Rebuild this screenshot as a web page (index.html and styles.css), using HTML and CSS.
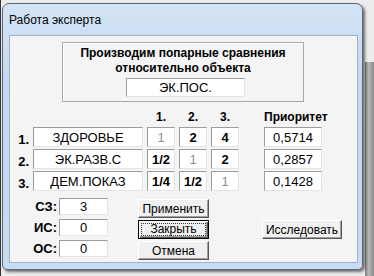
FILE: index.html
```html
<!DOCTYPE html>
<html lang="ru">
<head>
<meta charset="utf-8">
<link rel="stylesheet" href="styles.css">
</head>
<body>
<div class="desktop">
  <div class="window">
    <div class="titlebar">Работа эксперта</div>
    <div class="client">
      <div class="headbox">
        <div class="headtext">Производим попарные сравнения<br>относительно объекта</div>
        <div class="field objfield">ЭК.ПОС.</div>
      </div>

      <div class="matrix">
        <div></div><div></div>
        <div class="colhead">1.</div>
        <div class="colhead">2.</div>
        <div class="colhead">3.</div>
        <div class="colhead prio">Приоритет</div>

        <div class="rownum">1.</div>
        <div class="field">ЗДОРОВЬЕ</div>
        <div class="field cell diag">1</div>
        <div class="field cell">2</div>
        <div class="field cell">4</div>
        <div class="field prio">0,5714</div>

        <div class="rownum">2.</div>
        <div class="field">ЭК.РАЗВ.С</div>
        <div class="field cell">1/2</div>
        <div class="field cell diag">1</div>
        <div class="field cell">2</div>
        <div class="field prio">0,2857</div>

        <div class="rownum">3.</div>
        <div class="field">ДЕМ.ПОКАЗ</div>
        <div class="field cell">1/4</div>
        <div class="field cell">1/2</div>
        <div class="field cell diag">1</div>
        <div class="field prio">0,1428</div>
      </div>

      <div class="bottom">
        <div class="counts">
          <div class="clabel">СЗ:</div><div class="field small">3</div>
          <div class="clabel">ИС:</div><div class="field small">0</div>
          <div class="clabel">ОС:</div><div class="field small">0</div>
        </div>
        <div class="buttons">
          <button class="btn">Применить</button>
          <button class="btn default"><span class="focus">Закрыть</span></button>
          <button class="btn">Отмена</button>
        </div>
        <button class="btn explore">Исследовать</button>
      </div>
    </div>
  </div>
</div>
</body>
</html>
```
FILE: styles.css
```css
* {box-sizing: border-box;}
body {margin: 0; font-family: "Liberation Sans", Arial, sans-serif; color: #000;}
.desktop {
  width: 374px; height: 276px; overflow: hidden; padding: 3px 0 0 2px;
  background:
    linear-gradient(#333, #333) 0 0 / 1px 100% no-repeat,
    linear-gradient(to right, #7d7d7d, #b9b9b9 40%, #8a8a8a) 365px 62px / 9px 214px no-repeat,
    #ececec;
}
.window {
  width: 361px; height: 267px;
  border: 1px solid #56687c; border-radius: 7px 7px 5px 5px;
  background: linear-gradient(#d3e3f5, #c3d8ef 30%, #c7dbf1);
  box-shadow: 2px 2px 3px rgba(0,0,0,.55);
  padding: 0 4px 6px 6px;
  display: flex; flex-direction: column;
}
.titlebar {height: 31px; display: flex; align-items: center; font-size: 12px; padding-top: 1px;}
.client {flex: 1; background: #f4f4f4; border: 1px solid #9fb1c5;}

.field {
  background: #fff; border: 1px solid; border-color: #9c9c9c #e4e4e4 #e4e4e4 #9c9c9c;
  display: flex; align-items: center; justify-content: center;
  font-size: 13px; height: 20px; white-space: nowrap;
}

.headbox {
  margin: 6px 0 0 52px; width: 242px; height: 60px;
  border: 1px solid #a8a8a8; box-shadow: inset 1px 1px #fff;
  display: flex; flex-direction: column; align-items: center;
}
.headtext {font-size: 12px; font-weight: bold; text-align: center; line-height: 15px; margin-top: 3px;}
.objfield {width: 119px; height: 19px; margin: 2px 0 0 5px;}

.matrix {
  display: grid; margin: 8px 0 0 4px;
  grid-template-columns: 15px 110px 28px 28px 28px 79px;
  grid-template-rows: 15px 20px 20px 20px;
  column-gap: 4px; row-gap: 2px;
}
.matrix .prio {margin-left: 21px;}
.colhead {font-size: 12px; font-weight: bold; text-align: center; line-height: 14px;}
.rownum {font-size: 13px; font-weight: bold; text-align: right; align-self: end; line-height: 15px;}
.cell {font-weight: bold;}
.cell.diag {font-weight: normal; color: #8d8d8d;}

.bottom {display: flex; align-items: flex-start; margin-top: 7px;}
.counts {
  display: grid; grid-template-columns: 24px 49px; grid-auto-rows: 17px;
  column-gap: 2px; row-gap: 4px; margin-left: 23px;
}
.clabel {font-size: 13px; font-weight: bold; text-align: right; line-height: 17px;}
.field.small {height: 17px;}
.buttons {display: flex; flex-direction: column; gap: 2px; margin: 1px 0 0 30px;}
.btn {
  font-family: inherit; font-size: 12px; color: #000;
  width: 71px; height: 19px; padding: 0;
  background: #f0f0f0; border: 1px solid; border-color: #fff #555 #555 #fff;
  box-shadow: inset -1px -1px #a0a0a0;
}
.btn.default {border: 1px solid #000; box-shadow: inset 1px 1px #fff, inset -1px -1px #555, inset -2px -2px #a0a0a0; padding: 2px;}
.focus {display: block; height: 100%; border: 1px dotted #333; line-height: 11px;}
.explore {width: 80px; margin: 22px 0 0 53px;}
```
